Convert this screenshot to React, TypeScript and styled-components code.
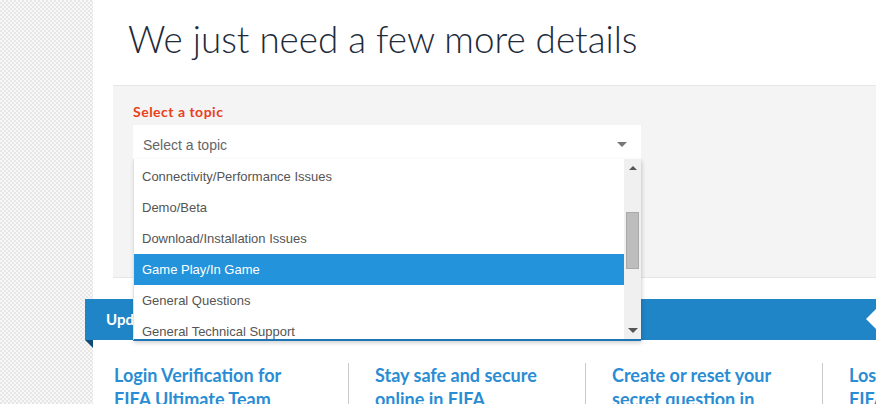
import styled, { createGlobalStyle } from 'styled-components';

const GlobalStyle = createGlobalStyle`
  html, body {
    margin: 0;
    padding: 0;
    overflow: hidden;
    width: 876px;
    height: 404px;
  }
  body {
    font-family: "Liberation Sans", Arial, sans-serif;
  }
`;

const Page = styled.div`
  display: flex;
  width: 876px;
  height: 404px;
  overflow: hidden;
  background-color: #f5f5f5;
  background-image: repeating-conic-gradient(#e6e6e6 0 25%, #f8f8f8 0 50%);
  background-size: 4px 4px;
`;

const Gutter = styled.div`
  flex: 0 0 93px;
`;

const Main = styled.div`
  flex: 1;
  background: #fff;
  min-width: 0;
`;

const Title = styled.h1`
  margin: 17px 0 0 35px;
  font-family: Lato, "Open Sans", sans-serif;
  font-weight: 300;
  font-size: 36.8px;
  line-height: 44px;
  color: #1e2b3a;
  white-space: nowrap;
`;

const Panel = styled.div`
  margin: 24px 0 0 20px;
  height: 193px;
  box-sizing: border-box;
  padding: 18px 0 0 20px;
  background: #f4f4f4;
  border-top: 1px solid #e6e6e6;
  border-bottom: 1px solid #e6e6e6;
`;

const Label = styled.div`
  font-family: Lato, "Open Sans", sans-serif;
  font-weight: 700;
  font-size: 14px;
  letter-spacing: 0.5px;
  line-height: 16px;
  color: #e8401c;
`;

const SelectWrap = styled.div`
  position: relative;
  width: 508px;
  margin-top: 5px;
`;

const SelectBox = styled.div`
  display: flex;
  justify-content: space-between;
  align-items: center;
  height: 34px;
  box-sizing: border-box;
  padding: 5px 14px 0 10px;
  background: #fff;
  font-size: 14px;
  color: #666;
`;

const Caret = styled.span<{ $up?: boolean; $color?: string }>`
  width: 0;
  height: 0;
  border-left: ${p => (p.$up ? 4 : 5)}px solid transparent;
  border-right: ${p => (p.$up ? 4 : 5)}px solid transparent;
  ${p =>
    p.$up
      ? `border-bottom: 4px solid ${p.$color || '#555'};`
      : `border-top: 5px solid ${p.$color || '#777'};`}
`;

const Dropdown = styled.div`
  position: absolute;
  top: 34px;
  left: 0;
  right: 0;
  height: 180px;
  display: flex;
  background: #fff;
  border-left: 1px solid #e2e2e2;
  border-bottom: 2px solid #1f74b3;
  box-shadow: 1px 2px 4px rgba(0, 0, 0, 0.18);
  z-index: 5;
`;

const List = styled.ul`
  flex: 1;
  list-style: none;
  margin: 0;
  padding: 2px 0 0;
  overflow: hidden;
`;

const Option = styled.li<{ $active?: boolean }>`
  height: 31px;
  line-height: 31px;
  padding-left: 8px;
  font-size: 13px;
  white-space: nowrap;
  color: ${p => (p.$active ? '#fff' : '#555')};
  background: ${p => (p.$active ? '#2393db' : 'transparent')};
`;

const Scrollbar = styled.div`
  flex: 0 0 17px;
  display: flex;
  flex-direction: column;
  background: #f0f0f0;
`;

const ScrollButton = styled.div`
  height: 17px;
  display: flex;
  align-items: center;
  justify-content: center;
`;

const Track = styled.div`
  flex: 1;
  padding-top: 36px;
`;

const Thumb = styled.div`
  width: 11px;
  height: 55px;
  margin-left: 2px;
  background: #bdbdbd;
  border: 1px solid #a9a9a9;
`;

const Banner = styled.div`
  position: relative;
  margin: 21px 0 0 -8px;
  height: 41px;
  padding-left: 21px;
  background: #1f85c6;
  color: #fff;
  font-family: Lato, "Open Sans", sans-serif;
  font-weight: 700;
  font-size: 15px;
  line-height: 41px;

  &::before {
    content: '';
    position: absolute;
    left: 0;
    bottom: -8px;
    border-top: 8px solid #0f4b74;
    border-left: 8px solid transparent;
  }

  &::after {
    content: '';
    position: absolute;
    right: 0;
    top: 10px;
    border-right: 10px solid #fff;
    border-top: 10px solid transparent;
    border-bottom: 10px solid transparent;
  }
`;

const Cards = styled.div`
  display: flex;
  margin-top: 23px;
  padding-left: 18px;
`;

const Card = styled.div`
  flex: 0 0 237px;
  box-sizing: border-box;
  padding-left: 26px;
  border-left: 1px solid #cacaca;

  &:first-child {
    border-left: none;
    padding-left: 3px;
  }
`;

const CardLink = styled.a`
  display: block;
  max-width: 176px;
  font-family: Lato, "Open Sans", sans-serif;
  font-weight: 700;
  font-size: 18px;
  line-height: 24px;
  color: #2a8dd4;
  text-decoration: none;
`;

const topics = [
  'Connectivity/Performance Issues',
  'Demo/Beta',
  'Download/Installation Issues',
  'Game Play/In Game',
  'General Questions',
  'General Technical Support',
];

const articles = [
  'Login Verification for FIFA Ultimate Team',
  'Stay safe and secure online in FIFA',
  'Create or reset your secret question in FIFA',
  'Lost access to your FIFA account',
];

export default function App() {
  return (
    <>
      <GlobalStyle />
      <Page>
        <Gutter />
        <Main>
          <Title>We just need a few more details</Title>
          <Panel>
            <Label>Select a topic</Label>
            <SelectWrap>
              <SelectBox>
                <span>Select a topic</span>
                <Caret />
              </SelectBox>
              <Dropdown>
                <List>
                  {topics.map(t => (
                    <Option key={t} $active={t === 'Game Play/In Game'}>
                      {t}
                    </Option>
                  ))}
                </List>
                <Scrollbar>
                  <ScrollButton>
                    <Caret $up />
                  </ScrollButton>
                  <Track>
                    <Thumb />
                  </Track>
                  <ScrollButton>
                    <Caret $color="#555" />
                  </ScrollButton>
                </Scrollbar>
              </Dropdown>
            </SelectWrap>
          </Panel>
          <Banner>Updates</Banner>
          <Cards>
            {articles.map(a => (
              <Card key={a}>
                <CardLink href="#">{a}</CardLink>
              </Card>
            ))}
          </Cards>
        </Main>
      </Page>
    </>
  );
}
